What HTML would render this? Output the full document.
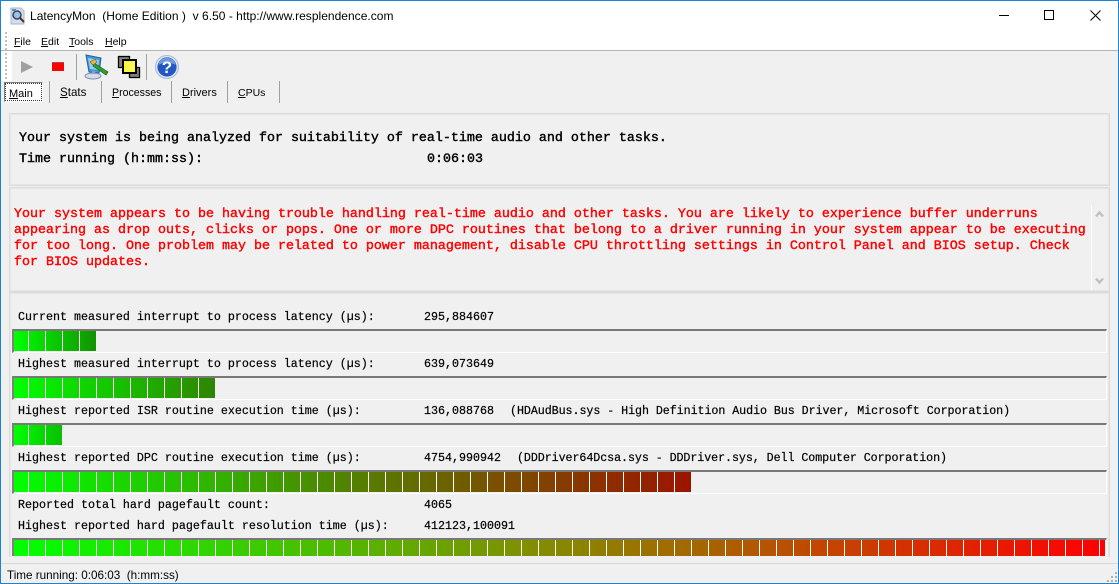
<!DOCTYPE html>
<html><head><meta charset="utf-8"><style>
html,body{margin:0;padding:0;background:#f0f0f0}
#w{position:relative;width:1119px;height:584px;overflow:hidden;background:#f0f0f0}
#w div,#w svg,#w span{position:absolute}
.ui{font:12px/16px "Liberation Sans",sans-serif;color:#000;white-space:pre}
.ui u{text-decoration:underline}
.b{font:normal 13.33px/16px "Liberation Mono",monospace;color:#000;white-space:pre;-webkit-text-stroke:.4px #000}
.r{color:#f00;-webkit-text-stroke:.4px #f00}
.m{font:normal 11.67px/14px "Liberation Mono",monospace;color:#000;white-space:pre;-webkit-text-stroke:.2px #000}
.p{border:1px solid #dcdcdc;box-shadow:inset 0 0 0 1px #e6e6e6;box-sizing:border-box}
.bar{left:12px;width:1095px;height:24px;box-sizing:border-box;border-top:2px solid #787878;border-left:2px solid #808080;border-right:1px solid #fff;border-bottom:1px solid #fff}
.fill{left:0;top:0;height:20px}
.seg{left:0;top:0;height:20px;background:repeating-linear-gradient(90deg,transparent 0,transparent 14px,#fff 14px,#fff 15px,transparent 15px,transparent 17px)}
.sep{background:#a0a0a0;width:1px}
.mn{font-size:10.5px}
</style></head><body><div id="w">
<div style="left:0;top:0;width:1119px;height:30px;background:#fff"></div>
<div style="left:0;top:30px;width:1119px;height:20px;background:#fff"></div>
<div style="left:0;top:50px;width:1119px;height:1px;background:#b4b4b4"></div>
<div style="left:0;top:51px;width:12px;height:30px;background:#fff"></div>

<svg style="left:9px;top:7px" width="18" height="18" viewBox="0 0 18 18"><path d="M2 1h10l3 3v13H2z" fill="#d5dde8" stroke="#a9b6c8"/><circle cx="8" cy="8" r="4" fill="#9cc3e6" stroke="#34465c" stroke-width="1.5"/><path d="M11 11l4 4" stroke="#43362a" stroke-width="2"/><path d="M3 2h4v2H3z" fill="#5b8fc7"/></svg>
<div class="ui" style="left:30px;top:8px;letter-spacing:.02px">LatencyMon  (Home Edition )  v 6.50 - http://www.resplendence.com</div>

<svg style="left:999px;top:14px" width="11" height="2"><rect width="10" height="1" y="1" fill="#000"/></svg>
<div style="left:1044px;top:10px;width:8px;height:8px;border:1px solid #000"></div>
<svg style="left:1090px;top:10px" width="11" height="11" viewBox="0 0 11 11"><path d="M.5.5l10 10M10.5.5l-10 10" stroke="#000" fill="none"/></svg>

<svg style="left:5px;top:32px" width="3" height="48"><g fill="#c0c0c0"><rect y="0" width="2" height="2"/><rect y="4" width="2" height="2"/><rect y="8" width="2" height="2"/><rect y="12" width="2" height="2"/><rect y="16" width="2" height="2"/><rect y="21" width="2" height="2"/><rect y="25" width="2" height="2"/><rect y="29" width="2" height="2"/><rect y="33" width="2" height="2"/><rect y="37" width="2" height="2"/><rect y="41" width="2" height="2"/><rect y="45" width="2" height="2"/></g></svg>

<div class="ui mn" style="left:14px;top:34px"><u>F</u>ile</div>
<div class="ui mn" style="left:41px;top:34px"><u>E</u>dit</div>
<div class="ui mn" style="left:69px;top:34px"><u>T</u>ools</div>
<div class="ui mn" style="left:105px;top:34px"><u>H</u>elp</div>

<svg style="left:20px;top:60px" width="14" height="14"><path d="M1 1l12 6-12 6z" fill="#a0a0a0"/></svg>
<div style="left:52px;top:62px;width:12px;height:9px;background:#f00;border-top:1px solid #b44;box-sizing:border-box"></div>
<div class="sep" style="left:76px;top:54px;height:26px"></div>
<svg style="left:84px;top:54px" width="26" height="26" viewBox="0 0 26 26"><path d="M2 1l15 3-2 15-10-1z" fill="#3f97e0" stroke="#2a5f9a"/><path d="M4 4l11 2-1 10-8-1z" fill="#8fd0f5"/><ellipse cx="9" cy="22" rx="8" ry="3" fill="#d4dcec" stroke="#7f90b0"/><path d="M8 17h3v3H8z" fill="#8fa0c0"/><path d="M10 9l14 9-2 3-13-9z" fill="#2fa02f" stroke="#185a18" stroke-width=".7"/><path d="M6 8l5-3 2 3-4 3z" fill="#e8b840" stroke="#805a10" stroke-width=".6"/></svg>
<svg style="left:117px;top:55px" width="24" height="24" viewBox="0 0 24 24"><rect x="1.5" y="1.5" width="11" height="11" fill="#808080" stroke="#000" stroke-width="1.3"/><rect x="12.5" y="12.5" width="10" height="10" fill="#808080" stroke="#000" stroke-width="1.3"/><rect x="6" y="5" width="13" height="13" fill="#ff0" stroke="#000" stroke-width="2"/><path d="M8 8h9M8 11h9M8 14h9M10 7v10M13 7v10M16 7v10" stroke="#f0f0a0" stroke-width="1"/></svg>
<div class="sep" style="left:146px;top:54px;height:26px"></div>
<svg style="left:155px;top:55px" width="24" height="24" viewBox="0 0 24 24"><circle cx="12" cy="12" r="11.5" fill="#dfe8f6" stroke="#a8b8d0"/><circle cx="12" cy="12" r="9.6" fill="#2358c0"/><path d="M3.5 10a8.5 7 0 0 1 17 0c-4-3-13-3-17 0z" fill="#6d9ae4"/><text x="12" y="18" text-anchor="middle" font-family="Liberation Sans" font-weight="bold" font-size="17" fill="#fff">?</text></svg>

<div style="left:4px;top:82px;width:39px;height:20px;box-sizing:border-box;background:#fff;border:1px solid;border-color:#808080 #fff #fff #808080"><div style="left:0;top:0;width:37px;height:18px;box-sizing:border-box;border:1px dotted #333"></div></div>
<div class="ui" style="left:9px;top:86px;font-size:11px"><u>M</u>ain</div>
<div class="sep" style="left:49px;top:81px;height:22px"></div>
<div class="ui" style="left:60px;top:85px;font-size:11.6px"><u>S</u>tats</div>
<div class="sep" style="left:101px;top:81px;height:22px"></div>
<div class="ui" style="left:112px;top:85px;font-size:10.6px"><u>P</u>rocesses</div>
<div class="sep" style="left:171px;top:81px;height:22px"></div>
<div class="ui" style="left:182px;top:85px;font-size:11px"><u>D</u>rivers</div>
<div class="sep" style="left:227px;top:81px;height:22px"></div>
<div class="ui" style="left:238px;top:85px;font-size:10.5px"><u>C</u>PUs</div>
<div class="sep" style="left:279px;top:81px;height:22px"></div>

<div class="p" style="left:9px;top:113px;width:1101px;height:73px"></div>
<div class="p" style="left:9px;top:187px;width:1101px;height:105px"></div>
<div class="p" style="left:9px;top:292px;width:1101px;height:280px"></div>
<div style="left:0;top:557px;width:1119px;height:27px;background:#f0f0f0"></div>

<div class="b" style="left:19px;top:131px">Your system is being analyzed for suitability of real-time audio and other tasks.</div>
<div class="b" style="left:19px;top:152px">Time running (h:mm:ss):</div>
<div class="b" style="left:427px;top:152px">0:06:03</div>

<div class="b r" style="left:14px;top:207px">Your system appears to be having trouble handling real-time audio and other tasks. You are likely to experience buffer underruns</div>
<div class="b r" style="left:14px;top:223px">appearing as drop outs, clicks or pops. One or more DPC routines that belong to a driver running in your system appear to be executing</div>
<div class="b r" style="left:14px;top:239px">for too long. One problem may be related to power management, disable CPU throttling settings in Control Panel and BIOS setup. Check</div>
<div class="b r" style="left:14px;top:255px">for BIOS updates.</div>

<div style="left:1091px;top:205px;width:1px;height:85px;background:#fff"></div>
<svg style="left:1095px;top:210px" width="9" height="8"><path d="M1 6.5l3.5-4L8 6.5" stroke="#c0c0c0" stroke-width="2.4" fill="none"/></svg>
<svg style="left:1095px;top:277px" width="9" height="8"><path d="M1 1.5l3.5 4L8 1.5" stroke="#c0c0c0" stroke-width="2.4" fill="none"/></svg>

<div class="m" style="left:18px;top:310px">Current measured interrupt to process latency (µs):</div>
<div class="m" style="left:424px;top:310px">295,884607</div>
<div class="bar" style="top:329px"><div class="fill" style="width:82px;background:linear-gradient(90deg,#0f0,#129400)"></div><div class="seg" style="width:82px"></div></div>

<div class="m" style="left:18px;top:357px">Highest measured interrupt to process latency (µs):</div>
<div class="m" style="left:424px;top:357px">639,073649</div>
<div class="bar" style="top:376px"><div class="fill" style="width:201px;background:linear-gradient(90deg,#0f0,#2e8500)"></div><div class="seg" style="width:201px"></div></div>

<div class="m" style="left:18px;top:404px">Highest reported ISR routine execution time (µs):</div>
<div class="m" style="left:424px;top:404px">136,088768</div>
<div class="m" style="left:510px;top:404px;letter-spacing:-.05px">(HDAudBus.sys - High Definition Audio Bus Driver, Microsoft Corporation)</div>
<div class="bar" style="top:423px"><div class="fill" style="width:48px;background:linear-gradient(90deg,#0f0,#08c000)"></div><div class="seg" style="width:48px"></div></div>

<div class="m" style="left:18px;top:451px">Highest reported DPC routine execution time (µs):</div>
<div class="m" style="left:424px;top:451px">4754,990942</div>
<div class="m" style="left:517px;top:451px;letter-spacing:-.06px">(DDDriver64Dcsa.sys - DDDriver.sys, Dell Computer Corporation)</div>
<div class="bar" style="top:470px"><div class="fill" style="width:677px;background:linear-gradient(90deg,#0f0 0,#4a8c00 45%,#7c4d00 73%,#9c1400 100%)"></div><div class="seg" style="width:677px"></div></div>

<div class="m" style="left:18px;top:498px">Reported total hard pagefault count:</div>
<div class="m" style="left:424px;top:498px">4065</div>
<div class="m" style="left:18px;top:519px">Highest reported hard pagefault resolution time (µs):</div>
<div class="m" style="left:424px;top:519px">412123,100091</div>
<div class="bar" style="top:538px;height:18px;border-bottom:0"><div class="fill" style="width:1091px;height:16px;background:linear-gradient(90deg,#0f0,#888800 50%,#f00)"></div><div class="seg" style="width:1091px;height:16px"></div></div>

<div style="left:1109px;top:292px;width:1px;height:264px;background:#dcdcdc"></div>
<div style="left:0;top:563px;width:1119px;height:1px;background:#d8d8d8"></div>
<div class="ui" style="left:7px;top:568px;font-size:11.7px">Time running: 0:06:03  (h:mm:ss)</div>
<svg style="left:1107px;top:572px" width="11" height="11"><g fill="#b0b0b0"><rect x="8" y="0" width="2" height="2"/><rect x="4" y="4" width="2" height="2"/><rect x="8" y="4" width="2" height="2"/><rect x="0" y="8" width="2" height="2"/><rect x="4" y="8" width="2" height="2"/><rect x="8" y="8" width="2" height="2"/></g></svg>

<div style="left:0;top:0;width:1119px;height:584px;box-sizing:border-box;border:1px solid #1883d7"></div>
</div></body></html>
